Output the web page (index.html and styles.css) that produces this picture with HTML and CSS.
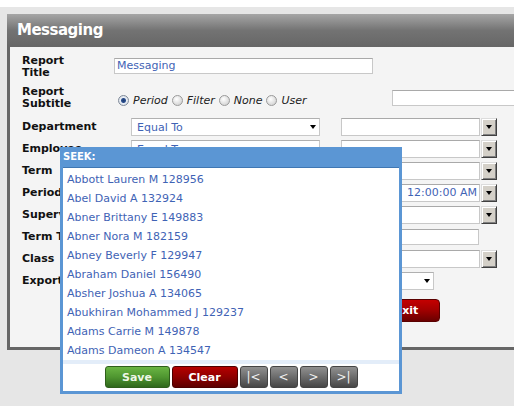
FILE: index.html
```html
<!DOCTYPE html>
<html>
<head>
<meta charset="utf-8">
<title>Messaging</title>
<link rel="stylesheet" href="styles.css">
</head>
<body>
<div class="page">
  <div class="window">
    <div class="titlebar">Messaging</div>
    <div class="wbody">
      <div class="row r1">
        <div class="lbl">Report<br>Title</div>
        <div class="txt title-in">Messaging</div>
      </div>
      <div class="row r2">
        <div class="lbl">Report<br>Subtitle</div>
        <div class="radios">
          <span class="radio on"></span><span class="rl">Period</span>
          <span class="radio"></span><span class="rl">Filter</span>
          <span class="radio"></span><span class="rl">None</span>
          <span class="radio"></span><span class="rl">User</span>
        </div>
        <div class="txt sub-in"></div>
      </div>
      <div class="row">
        <div class="lbl">Department</div>
        <div class="sel"><span>Equal To</span><i class="arr"></i></div>
        <div class="combo"><div class="txt cbox"></div><span class="dd"></span></div>
      </div>
      <div class="row">
        <div class="lbl">Employee</div>
        <div class="sel"><span>Equal To</span><i class="arr"></i></div>
        <div class="combo"><div class="txt cbox"></div><span class="dd"></span></div>
      </div>
      <div class="row">
        <div class="lbl">Term</div>
        <div class="sel"><span></span><i class="arr"></i></div>
        <div class="combo"><div class="txt cbox"></div><span class="dd"></span></div>
      </div>
      <div class="row">
        <div class="lbl">Period</div>
        <div class="sel"><span></span><i class="arr"></i></div>
        <div class="combo"><div class="txt cbox date">12:00:00 AM</div><span class="dd"></span></div>
      </div>
      <div class="row">
        <div class="lbl">Supervisor</div>
        <div class="sel"><span></span><i class="arr"></i></div>
        <div class="combo"><div class="txt cbox"></div><span class="dd"></span></div>
      </div>
      <div class="row">
        <div class="lbl">Term Type</div>
        <div class="sel"><span></span><i class="arr"></i></div>
        <div class="combo"><div class="txt cbox short"></div></div>
      </div>
      <div class="row">
        <div class="lbl">Class</div>
        <div class="sel"><span></span><i class="arr"></i></div>
        <div class="combo"><div class="txt cbox"></div><span class="dd"></span></div>
      </div>
      <div class="row">
        <div class="lbl">Export</div>
        <div class="sel gap"></div>
        <div class="combo"><div class="sel export"><span></span><i class="arr"></i></div></div>
      </div>
      <div class="row exit-row">
        <div class="btn exit">Exit</div>
      </div>
    </div>
  </div>

  <div class="seek">
    <div class="seek-h">SEEK:</div>
    <div class="list">
      <div class="item">Abbott Lauren M 128956</div>
      <div class="item">Abel David A 132924</div>
      <div class="item">Abner Brittany E 149883</div>
      <div class="item">Abner Nora M 182159</div>
      <div class="item">Abney Beverly F 129947</div>
      <div class="item">Abraham Daniel 156490</div>
      <div class="item">Absher Joshua A 134065</div>
      <div class="item">Abukhiran Mohammed J 129237</div>
      <div class="item">Adams Carrie M 149878</div>
      <div class="item">Adams Dameon A 134547</div>
    </div>
    <div class="strip"></div>
    <div class="btns">
      <div class="btn save">Save</div>
      <div class="btn clear">Clear</div>
      <div class="btn nav">|&lt;</div>
      <div class="btn nav">&lt;</div>
      <div class="btn nav">&gt;</div>
      <div class="btn nav">&gt;|</div>
    </div>
  </div>
</div>
</body>
</html>
```
FILE: styles.css
```css
* { box-sizing: border-box; }
html, body { margin: 0; padding: 0; }
body {
  background: #fff;
  width: 514px;
  height: 416px;
  overflow: hidden;
  font-family: "DejaVu Sans", Verdana, sans-serif;
  font-size: 11px;
}
.page {
  position: relative;
  margin-top: 7px;
  height: 399px;
  background: #e6e6e6;
  padding: 7px 0 0 7px;
  overflow: hidden;
}
.window { width: 530px; }
.titlebar {
  height: 33px;
  line-height: 33px;
  padding-left: 10px;
  color: #fff;
  font-weight: bold;
  font-size: 15px;
  letter-spacing: -0.5px;
  background: linear-gradient(#a6a6a6 0%, #737373 50%, #666 100%);
}
.wbody {
  height: 303px;
  background: #f4f4f4;
  border-left: 3px solid #666;
  border-bottom: 3px solid #666;
  padding: 8px 0 0 12px;
}
.row { display: flex; align-items: center; height: 22px; }
.r1 { height: 31px; align-items: flex-start; }
.r2 { height: 24px; align-items: flex-start; margin-bottom: 6px; }
.lbl {
  flex: none;
  width: 92px;
  font-weight: bold;
  line-height: 12px;
  color: #111;
  white-space: nowrap;
}
.txt {
  flex: none;
  height: 18px;
  border: 1px solid #c8c8c8;
  border-top-color: #a9a9a9;
  background: #fff;
  color: #3f63b5;
  padding: 0 2px;
  line-height: 16px;
  white-space: nowrap;
  overflow: hidden;
}
.title-in { margin-top: 3px; width: 259px; height: 16px; line-height: 14px; }
.sub-in { margin-top: 4px; width: 150px; height: 16px; }
.radios {
  flex: none;
  width: 278px;
  margin-top: 6px;
  height: 16px;
  padding-left: 4px;
  display: flex;
  align-items: center;
  font-style: italic;
  color: #222;
}
.radio {
  flex: none;
  width: 11px;
  height: 11px;
  border-radius: 50%;
  border: 1px solid #9a9a9a;
  background: radial-gradient(circle at 40% 35%, #fff 0, #e6e6e6 45%, #c9c9c9 100%);
  margin-right: 4px;
}
.radio.on {
  border-color: #7f8a99;
  background: radial-gradient(circle, #1c3a70 0, #2c4f8e 2px, #e9eef5 3px, #cfd4da 100%);
}
.rl { margin-right: 4px; }
.sel {
  flex: none;
  margin-left: 17px;
  width: 189px;
  height: 18px;
  border: 1px solid #c8c8c8;
  border-top-color: #b0b0b0;
  background: #fff;
  color: #3f63b5;
  padding: 0 3px 0 5px;
  display: flex;
  align-items: center;
  justify-content: space-between;
}
.arr {
  width: 0;
  height: 0;
  border-left: 3.5px solid transparent;
  border-right: 3.5px solid transparent;
  border-top: 4px solid #000;
}
.combo { flex: none; margin-left: 21px; display: flex; }
.cbox { width: 139px; }
.cbox.short { width: 138px; height: 16px; }
.date { text-align: right; }
.dd {
  flex: none;
  width: 16px;
  height: 18px;
  margin-left: 1px;
  background: #d4d0c8;
  border: 1px solid;
  border-color: #dcdcdc #404040 #404040 #dcdcdc;
  box-shadow: inset 1px 1px #fff, inset -1px -1px #808080;
  display: flex;
  align-items: center;
  justify-content: center;
}
.dd::after {
  content: "";
  border-left: 3.5px solid transparent;
  border-right: 3.5px solid transparent;
  border-top: 4px solid #000;
}
.sel.gap { visibility: hidden; }
.sel.export { margin-left: 0; width: 93px; }
.exit-row { margin-top: 7px; height: 23px; }
.btn {
  flex: none;
  height: 22px;
  border-radius: 3px;
  color: #fff;
  font-weight: bold;
  display: flex;
  align-items: center;
  justify-content: center;
}
.exit {
  margin-left: 351px;
  width: 67px;
  height: 23px;
  border-radius: 4px;
  background: linear-gradient(#c40000 0%, #a40000 45%, #6a0000 100%);
  border: 1px solid #5a0000;
}
.seek {
  position: absolute;
  left: 60px;
  top: 140px;
  width: 342px;
  height: 247px;
  background: #fff;
  border: 3px solid #5b96d4;
  border-top: 0;
}
.seek-h {
  height: 21px;
  background: #5b96d4;
  border-bottom: 1px solid #3f77b3;
  color: #fff;
  font-weight: bold;
  font-size: 10px;
  line-height: 20px;
}
.list { padding-top: 2px; height: 192px; }
.item {
  height: 19px;
  line-height: 19px;
  padding-left: 4px;
  color: #3f63b5;
  white-space: nowrap;
}
.strip { height: 4px; background: #e3edf9; }
.btns { display: flex; justify-content: center; gap: 2px; padding-top: 2px; }
.save {
  width: 65px;
  background: linear-gradient(#6ab543 0%, #4f9630 50%, #2f681c 100%);
  border: 1px solid #2f5f1c;
  color: #eef7e6;
}
.clear {
  width: 66px;
  background: linear-gradient(#b50000 0%, #8e0000 50%, #5e0000 100%);
  border: 1px solid #4e0000;
}
.nav {
  width: 28px;
  font-weight: normal;
  font-size: 12px;
  color: #f0f0f0;
  background: linear-gradient(#909090 0%, #6c6c6c 50%, #464646 100%);
  border: 1px solid #444;
}
```
